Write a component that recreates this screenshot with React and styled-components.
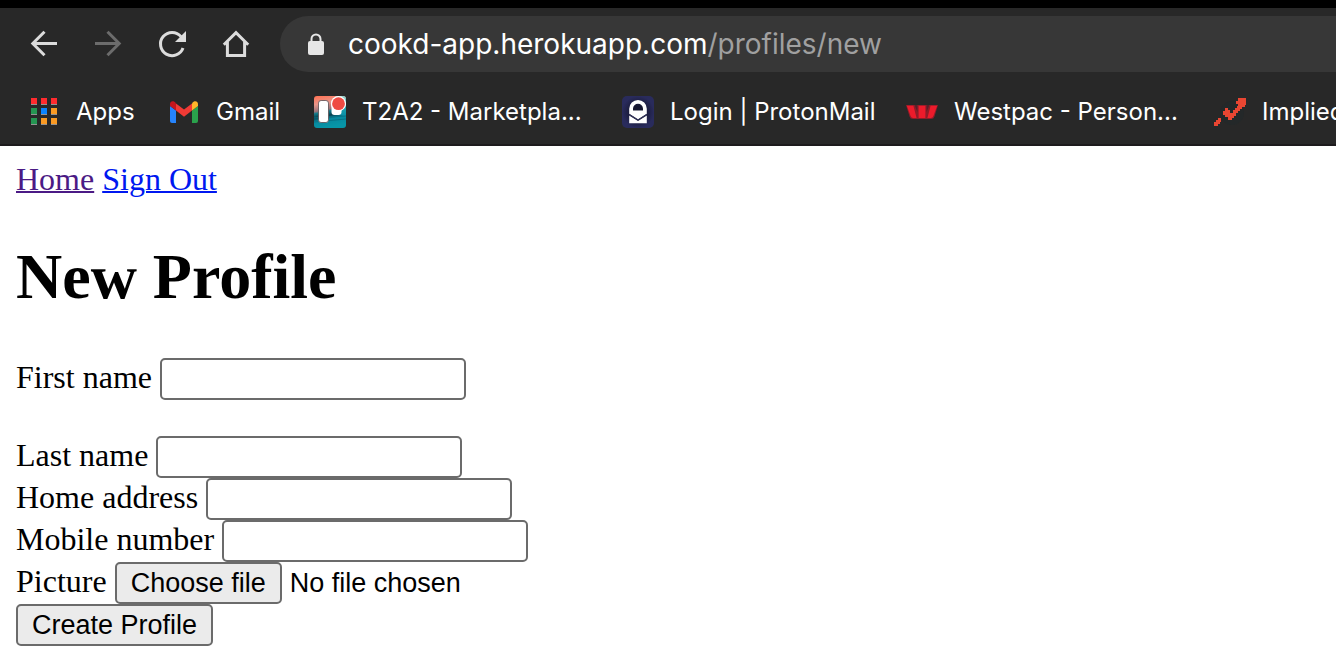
import React, { useRef } from "react";
import styled, { createGlobalStyle } from "styled-components";

const GlobalStyle = createGlobalStyle`
  * { box-sizing: border-box; }
  body {
    margin: 0;
    background: #ffffff;
    color: #000000;
    font-family: "Liberation Serif", "Times New Roman", serif;
    font-size: 32px;
    line-height: 34px;
  }
`;

const Browser = styled.header`
  background: #282828;
  border-top: 8px solid #000000;
  border-bottom: 2px solid #1d1b1d;
  font-family: Inter, Roboto, sans-serif;
  color: #ffffff;
  overflow: hidden;
`;

const Toolbar = styled.div`
  display: flex;
  align-items: center;
  height: 72px;
  padding-left: 12px;
`;

const NavButton = styled.button`
  display: grid;
  place-items: center;
  flex: none;
  width: 64px;
  height: 56px;
  padding: 0;
  border: 0;
  background: none;
  color: ${(p) => (p.disabled ? "#6c6c6c" : "#dcdcdc")};
`;

const Icon = styled.svg`
  display: block;
  flex: none;
  width: 32px;
  height: 32px;
`;

const AddressBar = styled.div`
  display: flex;
  align-items: center;
  gap: 16px;
  flex: 1;
  height: 56px;
  margin-left: 12px;
  padding-left: 20px;
  border-radius: 28px 0 0 28px;
  background: #373737;
  font-size: 28px;
  white-space: nowrap;
`;

const UrlPath = styled.span`
  color: #a0a0a0;
`;

const Bookmarks = styled.nav`
  display: flex;
  align-items: center;
  height: 64px;
  padding-left: 28px;
`;

const Bookmark = styled.a`
  display: flex;
  align-items: center;
  gap: 16px;
  flex: none;
  width: ${(p) => p.$width}px;
  color: #ffffff;
  font-size: 24px;
  text-decoration: none;
  white-space: nowrap;
`;

const Page = styled.main`
  padding: 16px;
`;

const PageLink = styled.a`
  color: ${(p) => (p.$visited ? "#4b1a85" : "#0018f0")};
  text-decoration-thickness: 2px;
`;

const Title = styled.h1`
  margin: 45px 0;
  font-size: 64px;
  line-height: 72px;
`;

const Row = styled.div`
  display: flex;
  align-items: center;
  gap: 8px;
  height: 42px;
  margin-bottom: ${(p) => (p.$spaced ? 36 : 0)}px;
`;

const Label = styled.label`
  padding-bottom: 4px;
`;

const TextInput = styled.input`
  width: 306px;
  height: 42px;
  padding: 2px 4px;
  border: 2px solid #6b6b6b;
  border-radius: 5px;
  background: #ffffff;
  font: 27px "Liberation Sans", Arial, sans-serif;
`;

const Button = styled.button`
  height: 42px;
  padding: 0 14px;
  border: 2px solid #6b6b6b;
  border-radius: 5px;
  background: #ebebeb;
  color: #000000;
  font: 27px "Liberation Sans", Arial, sans-serif;
`;

const FileStatus = styled.span`
  font: 27px "Liberation Sans", Arial, sans-serif;
`;

const stroke = { fill: "none", stroke: "currentColor", strokeWidth: 3 };

const BackIcon = () => (
  <Icon viewBox="0 0 32 32" {...stroke}>
    <path d="M29 15.5H5M16.5 3.8L4.8 15.5L16.5 27.2" />
  </Icon>
);

const ForwardIcon = () => (
  <Icon viewBox="0 0 32 32" {...stroke}>
    <path d="M3 15.5H27M15.5 3.8L27.2 15.5L15.5 27.2" />
  </Icon>
);

const ReloadIcon = () => (
  <Icon viewBox="0 0 32 32" {...stroke}>
    <path d="M25 8.6A11.6 11.6 0 1 0 27 20" />
    <path d="M30 3V14H19Z" fill="currentColor" stroke="none" />
  </Icon>
);

const HomeIcon = () => (
  <Icon viewBox="0 0 32 32" {...stroke}>
    <path d="M3.8 16.7L16 4.7L28.2 16.7" />
    <path d="M7.4 14V27.6H24.6V14" />
  </Icon>
);

const LockIcon = () => (
  <Icon viewBox="0 0 32 32">
    <rect x="8" y="13" width="16" height="14" rx="2" fill="#e6e6e6" />
    <path d="M11.5 14V11a4.5 4.5 0 0 1 9 0V14" fill="none" stroke="#e6e6e6" strokeWidth="2" />
  </Icon>
);

const appColors = ["#ff2b2e", "#ff2b2e", "#ff2b2e", "#259552", "#0a84ff", "#fa9a23", "#259552", "#fa9a23", "#fa9a23"];

const AppsIcon = () => (
  <Icon viewBox="0 0 32 32">
    {appColors.map((color, i) => {
      const x = 3 + (i % 3) * 10;
      const y = 2 + Math.floor(i / 3) * 10;
      return (
        <g key={i}>
          <rect x={x} y={y} width="6" height="7" fill="#929292" />
          <rect x={x} y={y} width="6" height="6" fill={color} />
        </g>
      );
    })}
  </Icon>
);

const GmailIcon = () => (
  <Icon viewBox="0 0 32 32">
    <path d="M2 10L8 14.5V27H4a2 2 0 0 1-2-2Z" fill="#2684fc" />
    <path d="M30 10L24 14.5V27h4a2 2 0 0 0 2-2Z" fill="#2aa14c" />
    <path d="M8 7.4L16 13.4L24 7.4V14.5L16 20.7L8 14.5Z" fill="#f03a35" />
    <path d="M2 8.2C2 5.2 5.2 4 7.4 6.6L8 7.4V14.5L2 10Z" fill="#c5161e" />
    <path d="M30 8.2C30 5.2 26.8 4 24.6 6.6L24 7.4V14.5L30 10Z" fill="#ffb52a" />
  </Icon>
);

const BoardIcon = () => (
  <Icon viewBox="0 0 32 32">
    <defs>
      <linearGradient id="sunset" x1="0.1" y1="0" x2="0.3" y2="1">
        <stop offset="0" stopColor="#ff7355" />
        <stop offset="0.25" stopColor="#e9968a" />
        <stop offset="0.46" stopColor="#98737a" />
        <stop offset="0.52" stopColor="#127b8a" />
        <stop offset="0.65" stopColor="#07404f" />
        <stop offset="0.76" stopColor="#07889e" />
        <stop offset="1" stopColor="#0795a7" />
      </linearGradient>
      <linearGradient id="sea" x1="0" y1="0" x2="0" y2="1">
        <stop offset="0" stopColor="#9bd5ce" />
        <stop offset="0.5" stopColor="#21a3ae" />
        <stop offset="1" stopColor="#078ca5" />
      </linearGradient>
    </defs>
    <rect width="32" height="32" rx="3" fill="url(#sunset)" />
    <path d="M28 0h1a3 3 0 0 1 3 3v18L22 17V0Z" fill="url(#sea)" />
    <path d="M0 22L32 20M0 26L32 23" stroke="#087286" strokeWidth="1" />
    <rect x="4.5" y="4.5" width="10" height="22" rx="2.6" fill="#fff" stroke="#594c51" strokeWidth="0.8" />
    <rect x="17.5" y="6" width="10" height="13" rx="3" fill="#fff" />
    <circle cx="24.5" cy="7.7" r="7.6" fill="#fff" />
    <circle cx="24.5" cy="7.7" r="6.4" fill="#ef4b43" />
  </Icon>
);

const ProtonIcon = () => (
  <Icon viewBox="0 0 32 32">
    <defs>
      <radialGradient id="navy">
        <stop offset="0.35" stopColor="#15162f" />
        <stop offset="1" stopColor="#292b5c" />
      </radialGradient>
    </defs>
    <rect width="32" height="32" rx="5" fill="url(#navy)" />
    <path
      fillRule="evenodd"
      d="M7.2 17.8V12.8a8.8 8.8 0 0 1 17.6 0V17.8L16 23.5ZM11 14.6H21V12.8a5 5 0 0 0-10 0Z"
      fill="#fff"
    />
    <path d="M7.2 19.6L16 25L24.8 19.6V27.2H7.2Z" fill="#fff" />
    <path d="M7.2 18.4L16 23.9L24.8 18.4" fill="none" stroke="#34365c" strokeWidth="1.2" />
  </Icon>
);

const WestpacIcon = () => (
  <Icon viewBox="0 0 32 32">
    <path d="M0 9H32L28.5 20.5Q27.8 23 25 23H7Q4.2 23 3.5 20.5Z" fill="#8f1c28" />
    <path d="M0.8 9.8H7.4L10.6 22H7.2Q5.2 22 4.6 20Z" fill="#ec1b2b" />
    <path d="M31.2 9.8H24.6L21.4 22H24.8Q26.8 22 27.4 20Z" fill="#ec1b2b" />
    <path d="M8.6 9H11.4V16ZM23.4 9H20.6V16Z" fill="#55222a" />
    <rect x="12.6" y="9.8" width="6.8" height="12.2" fill="#ec1b2b" />
  </Icon>
);

const TrendIcon = () => (
  <Icon viewBox="0 0 32 32">
    <circle cx="18" cy="17" r="12" fill="#242829" />
    <path
      d="M24 2H32V9H31V11H28V13H26V15H24V17H22V20H20V22H18V24H14V21H11V19H9V15H11V12H14V14H16V17H19V14H21V12H23V10H24V8H22V5H24ZM4 22H7V26H6V28H4V30H0V26H2V24H4Z"
      fill="#e94632"
    />
  </Icon>
);

const bookmarks = [
  { text: "Apps", width: 140, Glyph: AppsIcon },
  { text: "Gmail", width: 146, Glyph: GmailIcon },
  { text: "T2A2 - Marketpla...", width: 308, Glyph: BoardIcon },
  { text: "Login | ProtonMail", width: 284, Glyph: ProtonIcon },
  { text: "Westpac - Person...", width: 308, Glyph: WestpacIcon },
  { text: "Implied", width: 160, Glyph: TrendIcon },
];

const fields = [
  { id: "first_name", text: "First name", spaced: true },
  { id: "last_name", text: "Last name" },
  { id: "home_address", text: "Home address" },
  { id: "mobile_number", text: "Mobile number" },
];

export default function App() {
  const fileInput = useRef(null);

  return (
    <>
      <GlobalStyle />
      <Browser>
        <Toolbar>
          <NavButton aria-label="Back"><BackIcon /></NavButton>
          <NavButton aria-label="Forward" disabled><ForwardIcon /></NavButton>
          <NavButton aria-label="Reload"><ReloadIcon /></NavButton>
          <NavButton aria-label="Home"><HomeIcon /></NavButton>
          <AddressBar>
            <LockIcon />
            <span>cookd-app.herokuapp.com<UrlPath>/profiles/new</UrlPath></span>
          </AddressBar>
        </Toolbar>
        <Bookmarks>
          {bookmarks.map(({ text, width, Glyph }) => (
            <Bookmark key={text} href="#" $width={width}>
              <Glyph />
              {text}
            </Bookmark>
          ))}
        </Bookmarks>
      </Browser>
      <Page>
        <nav>
          <PageLink href="#" $visited>Home</PageLink>{" "}
          <PageLink href="#">Sign Out</PageLink>
        </nav>
        <Title>New Profile</Title>
        <form onSubmit={(e) => e.preventDefault()}>
          {fields.map(({ id, text, spaced }) => (
            <Row key={id} $spaced={spaced}>
              <Label htmlFor={id}>{text}</Label>
              <TextInput id={id} type="text" />
            </Row>
          ))}
          <Row>
            <Label htmlFor="picture">Picture</Label>
            <input ref={fileInput} id="picture" type="file" hidden />
            <Button type="button" onClick={() => fileInput.current.click()}>Choose file</Button>
            <FileStatus>No file chosen</FileStatus>
          </Row>
          <Button type="submit">Create Profile</Button>
        </form>
      </Page>
    </>
  );
}
